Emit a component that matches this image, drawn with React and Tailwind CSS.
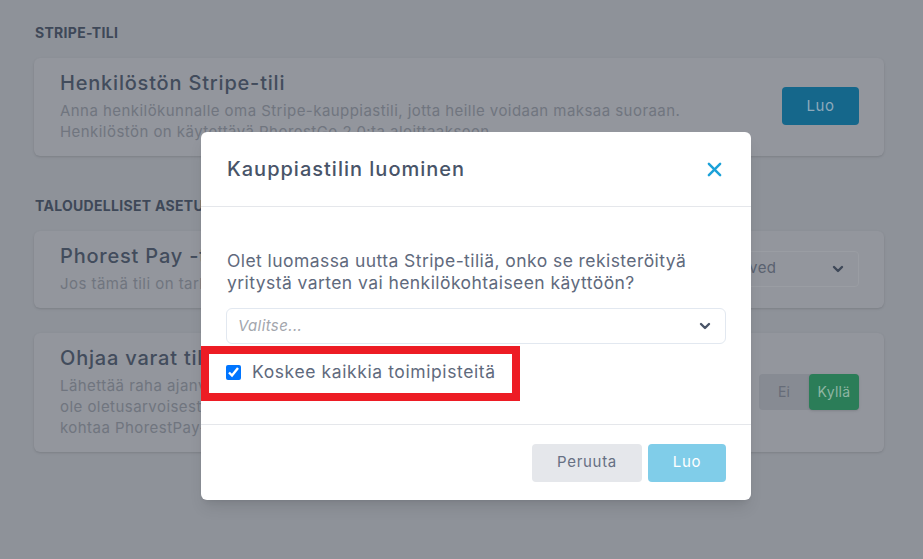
import React from "react";

const ChevronDown = ({ className }) => (
  <svg viewBox="0 0 12 8" className={className} fill="none" stroke="currentColor" strokeWidth="2.4" strokeLinecap="round" strokeLinejoin="round">
    <polyline points="2,2 6,6 10,2" />
  </svg>
);

const CloseIcon = () => (
  <svg viewBox="0 0 16 16" className="w-[15px] h-[15px] text-[#1ba1d8]" fill="none" stroke="currentColor" strokeWidth="2.6" strokeLinecap="round">
    <line x1="2" y1="2" x2="14" y2="14" />
    <line x1="14" y1="2" x2="2" y2="14" />
  </svg>
);

function SettingCard({ title, lines, children }) {
  return (
    <div className="flex items-center justify-between rounded-md bg-[#93969d] shadow-sm pl-[26px] pr-[25px] pt-[12px] pb-[14px]">
      <div>
        <div className="text-[20px] leading-[26px] font-medium tracking-[0.8px] text-[#424c5c]">{title}</div>
        <div className="mt-[4px] text-[15px] leading-[21px] tracking-[0.45px] text-[#70757f]">
          {lines.map((l, i) => (
            <div key={i} className="whitespace-nowrap">{l}</div>
          ))}
        </div>
      </div>
      {children}
    </div>
  );
}

export default function App() {
  return (
    <div className="relative h-[559px] w-full overflow-hidden bg-[#8e9299] font-['Inter',sans-serif]">
      <div className="ml-[34px] w-[850px] pt-[24px]">
        <div className="text-[14px] leading-[18px] font-bold uppercase tracking-[0.3px] text-[#3e4858] mb-[16px] pl-px">Stripe-tili</div>
        <SettingCard
          title="Henkilöstön Stripe-tili"
          lines={[
            "Anna henkilökunnalle oma Stripe-kauppiastili, jotta heille voidaan maksaa suoraan.",
            "Henkilöstön on käytettävä PhorestGo 2.0:ta aloittaakseen.",
          ]}
        >
          <button className="h-[38px] w-[77px] rounded-[4px] bg-[#15678b] text-[15px] tracking-[0.5px] text-[#8eaabb]">Luo</button>
        </SettingCard>

        <div className="mt-[41px] text-[14px] leading-[18px] font-bold uppercase tracking-[0.3px] text-[#3e4858] mb-[16px] pl-px">Taloudelliset asetukset</div>
        <div className="flex flex-col gap-[25px]">
          <SettingCard
            title="Phorest Pay -tili"
            lines={["Jos tämä tili on tarkistettu, voit ottaa maksut vastaan."]}
          >
            <div className="flex h-[36px] w-[168px] items-center justify-between rounded-[4px] border border-[#9a9da3] bg-[#93969d] pl-[12px] pr-[14px]">
              <span className="text-[15px] tracking-[0.45px] text-[#5a6270]">Approved</span>
              <ChevronDown className="w-[12px] h-[8px] text-[#3e4858]" />
            </div>
          </SettingCard>
          <SettingCard
            title="Ohjaa varat tilille"
            lines={[
              "Lähettää raha ajanvarauksista suoraan tilille. Tämä ei",
              "ole oletusarvoisesti käytössä, ja se koskee vain",
              "kohtaa PhorestPay-maksuja.",
            ]}
          >
            <div className="flex h-[36px] w-[100px] rounded-[4px] bg-[#878b93]">
              <button className="w-[50px] text-[14px] text-[#666c78]">Ei</button>
              <button className="w-[50px] rounded-[4px] bg-[#2b7d58] text-[14px] tracking-[0.3px] text-[#8fb5a3] shadow">Kyllä</button>
            </div>
          </SettingCard>
        </div>
      </div>

      {/* modal */}
      <div className="absolute left-[201px] top-[132px] w-[550px] rounded-md bg-white shadow-lg">
        <div className="flex h-[75px] items-center justify-between border-b border-[#e5e7eb] pl-[26px] pr-[29px]">
          <h2 className="text-[20px] font-medium tracking-[1px] text-[#485468]">Kauppiastilin luominen</h2>
          <CloseIcon />
        </div>
        <div className="px-[25px] pt-[43px] pb-[40px]">
          <p className="text-[17.5px] leading-[22px] tracking-[0.43px] text-[#5f6a7d] pl-[1px]">
            Olet luomassa uutta Stripe-tiliä, onko se rekisteröityä
            <br />
            yritystä varten vai henkilökohtaiseen käyttöön?
          </p>
          <div className="mt-[14px] flex h-[36px] items-center justify-between rounded-md border border-[#e2e8f0] pl-[11px] pr-[14px]">
            <span className="text-[15px] italic tracking-[0.4px] text-[#a3a6ad]">Valitse...</span>
            <ChevronDown className="w-[12px] h-[8px] text-[#4a5568]" />
          </div>
          <label className="mt-[16px] flex h-[24px] items-center gap-[11px]">
            <input type="checkbox" defaultChecked className="h-[15px] w-[15px] accent-[#0075ff]" />
            <span className="text-[17.5px] tracking-[0.6px] text-[#5f6a7d]">Koskee kaikkia toimipisteitä</span>
          </label>
        </div>
        <div className="flex h-[76px] items-center justify-end gap-[6px] border-t border-[#e5e7eb] px-[25px]">
          <button className="h-[38px] w-[110px] rounded-[4px] bg-[#e5e7eb] text-[15px] tracking-[0.7px] text-[#677083]">Peruuta</button>
          <button className="h-[38px] w-[78px] rounded-[4px] bg-[#80cde9] text-[15px] tracking-[0.7px] text-white">Luo</button>
        </div>
      </div>

      {/* highlight annotation */}
      <div className="pointer-events-none absolute left-[201px] top-[346px] h-[55px] w-[319px] border-[8px] border-[#ed1c24]" />
    </div>
  );
}
